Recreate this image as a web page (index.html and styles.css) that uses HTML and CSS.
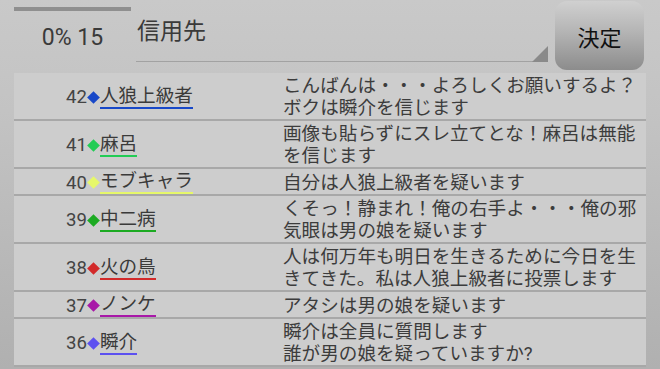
FILE: index.html
```html
<!DOCTYPE html>
<html lang="ja">
<head>
  <meta charset="UTF-8">
  <meta name="viewport" content="width=device-width, initial-scale=1.0">
  <title>投票</title>
  <link rel="stylesheet" href="styles.css">
</head>
<body>

  <div class="top">
    <div class="status">
      <div class="progress"></div>
      <div class="count">0% 15</div>
    </div>
    <div class="picker">
      <span class="picker-text">信用先</span>
      <span class="picker-arrow"></span>
    </div>
    <button class="decide">決定</button>
  </div>

  <div class="list">
    <div class="row">
      <div class="who mark-blue"><span class="num">42</span><span class="dia"></span><span class="name">人狼上級者</span></div>
      <div class="msg">こんばんは・・・よろしくお願いするよ？ボクは瞬介を信じます</div>
    </div>
    <div class="row">
      <div class="who mark-green"><span class="num">41</span><span class="dia"></span><span class="name">麻呂</span></div>
      <div class="msg">画像も貼らずにスレ立てとな！麻呂は無能を信じます</div>
    </div>
    <div class="row">
      <div class="who mark-yellow"><span class="num">40</span><span class="dia"></span><span class="name">モブキャラ</span></div>
      <div class="msg">自分は人狼上級者を疑います</div>
    </div>
    <div class="row">
      <div class="who mark-leaf"><span class="num">39</span><span class="dia"></span><span class="name">中二病</span></div>
      <div class="msg">くそっ！静まれ！俺の右手よ・・・俺の邪気眼は男の娘を疑います</div>
    </div>
    <div class="row">
      <div class="who mark-red"><span class="num">38</span><span class="dia"></span><span class="name">火の鳥</span></div>
      <div class="msg">人は何万年も明日を生きるために今日を生きてきた。私は人狼上級者に投票します</div>
    </div>
    <div class="row">
      <div class="who mark-purple"><span class="num">37</span><span class="dia"></span><span class="name">ノンケ</span></div>
      <div class="msg">アタシは男の娘を疑います</div>
    </div>
    <div class="row">
      <div class="who mark-violet"><span class="num">36</span><span class="dia"></span><span class="name">瞬介</span></div>
      <div class="msg">瞬介は全員に質問します<br>誰が男の娘を疑っていますか?</div>
    </div>
  </div>

</body>
</html>
```

FILE: styles.css
```css
* {
  box-sizing: border-box;
  margin: 0;
  padding: 0;
}
body {
  width: 660px;
  height: 369px;
  overflow: hidden;
  font-family: Roboto, "Noto Sans CJK JP", sans-serif;
  background: linear-gradient(to bottom, #c9c9c9 0%, #c3c3c3 30%, #b0b0b0 100%);
  color: #3c3c3c;
}

/* 上部：進捗・選択・決定ボタン */
.top {
  height: 73px;
  display: flex;
  align-items: flex-start;
}
.status {
  width: 117px;
  margin-left: 14px;
  padding-top: 7px;
}
.progress {
  height: 4px;
  background-color: #8f8f8f;
}
.count {
  margin-top: 13px;
  font-size: 23px;
  line-height: 27px;
  text-align: center;
  color: #3a3a3a;
}
.picker {
  position: relative;
  width: 412px;
  height: 62px;
  margin-left: 5px;
  padding-top: 18px;
  padding-left: 1px;
  border-bottom: 1px solid #a2a2a2;
}
.picker-text {
  font-size: 23px;
  line-height: 27px;
  color: #3a3a3a;
}
.picker-arrow {
  position: absolute;
  right: 0;
  bottom: -1px;
  width: 16px;
  height: 16px;
  background-color: #8a8a8a;
  clip-path: polygon(100% 0, 100% 100%, 0 100%);
}
.decide {
  width: 89px;
  height: 69px;
  margin-top: 1px;
  margin-left: 7px;
  border: none;
  border-radius: 12px;
  background: linear-gradient(to bottom, #d0d0d0 0%, #b4b4b4 45%, #8c8c8c 100%);
  font-family: Roboto, "Noto Sans CJK JP", sans-serif;
  font-size: 22px;
  color: #111;
}

/* 発言リスト */
.list {
  margin: 0 14px;
  background-color: #cdcdcd;
}
.row {
  display: grid;
  grid-template-columns: 269px 1fr;
  align-items: center;
  padding-top: 2px;
  border-bottom: 2px solid #a8a8a8;
}
.who {
  display: flex;
  align-items: center;
  padding-left: 52px;
  font-size: 18.6px;
}
.num {
  color: #444;
  line-height: 20px;
}
.dia {
  width: 9px;
  height: 9px;
  margin: 0 2px;
  background-color: var(--mark);
  transform: rotate(45deg);
}
.name {
  line-height: 20px;
  padding-bottom: 1px;
  border-bottom: 2px solid var(--mark);
  color: #3a3a3a;
}
.msg {
  font-size: 18.6px;
  line-height: 22px;
  color: #3c3c3c;
}

.mark-blue { --mark: #1848c8; }
.mark-green { --mark: #22cc55; }
.mark-yellow { --mark: #e6f86a; }
.mark-leaf { --mark: #1caa22; }
.mark-red { --mark: #d22a2a; }
.mark-purple { --mark: #a818a8; }
.mark-violet { --mark: #5c50f0; }
```
